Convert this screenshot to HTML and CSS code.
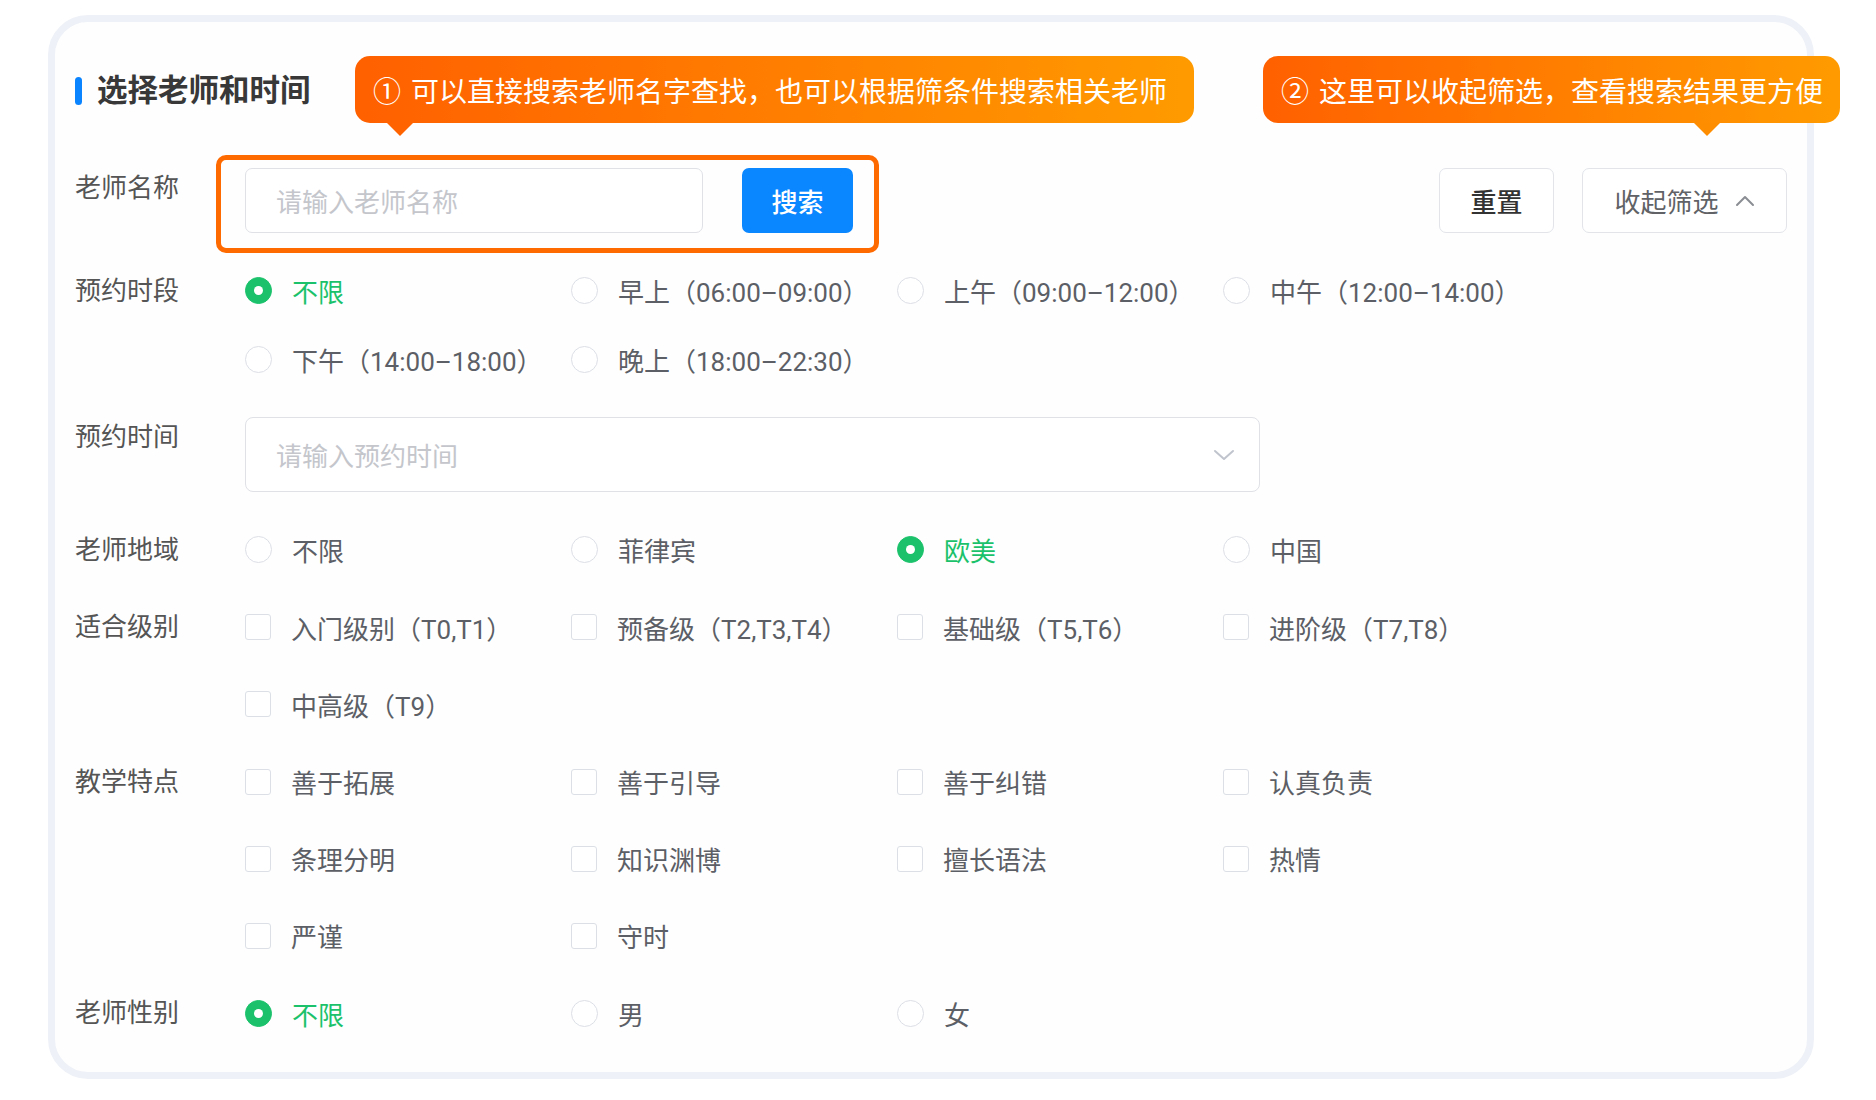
FILE: index.html
```html
<!DOCTYPE html>
<html lang="zh-CN">
<head>
<meta charset="utf-8">
<title>选择老师和时间</title>
<link rel="stylesheet" href="styles.css">
</head>
<body>
<div class="card">
  <div class="header">
    <span class="bar"></span>
    <h2 class="title">选择老师和时间</h2>
  </div>

  <div class="form">
    <div class="item">
      <div class="label">老师名称</div>
      <div class="name-controls">
        <div class="input input-name"><span class="ph">请输入老师名称</span></div>
        <button class="btn btn-primary">搜索</button>
      </div>
      <div class="actions">
        <button class="btn btn-default btn-reset">重置</button>
        <button class="btn btn-default btn-collapse">收起筛选<svg class="chev-up" width="20" height="12" viewBox="0 0 20 12"><polyline points="2,10 10,2 18,10" fill="none" stroke="#8a8d93" stroke-width="2" stroke-linecap="round" stroke-linejoin="round"/></svg></button>
      </div>
    </div>

    <div class="item">
      <div class="label">预约时段</div>
      <div class="options radios">
        <label class="opt checked"><span class="radio"></span>不限</label>
        <label class="opt"><span class="radio"></span>早上（06:00–09:00）</label>
        <label class="opt"><span class="radio"></span>上午（09:00–12:00）</label>
        <label class="opt"><span class="radio"></span>中午（12:00–14:00）</label>
        <label class="opt"><span class="radio"></span>下午（14:00–18:00）</label>
        <label class="opt"><span class="radio"></span>晚上（18:00–22:30）</label>
      </div>
    </div>

    <div class="item">
      <div class="label">预约时间</div>
      <div class="input input-time">
        <span class="ph">请输入预约时间</span>
        <svg class="chev-down" width="22" height="12" viewBox="0 0 22 12"><polyline points="2,2 11,10 20,2" fill="none" stroke="#c0c4cc" stroke-width="2" stroke-linecap="round" stroke-linejoin="round"/></svg>
      </div>
    </div>

    <div class="item">
      <div class="label">老师地域</div>
      <div class="options radios">
        <label class="opt"><span class="radio"></span>不限</label>
        <label class="opt"><span class="radio"></span>菲律宾</label>
        <label class="opt checked"><span class="radio"></span>欧美</label>
        <label class="opt"><span class="radio"></span>中国</label>
      </div>
    </div>

    <div class="item">
      <div class="label">适合级别</div>
      <div class="options checks">
        <label class="opt"><span class="checkbox"></span>入门级别（T0,T1）</label>
        <label class="opt"><span class="checkbox"></span>预备级（T2,T3,T4）</label>
        <label class="opt"><span class="checkbox"></span>基础级（T5,T6）</label>
        <label class="opt"><span class="checkbox"></span>进阶级（T7,T8）</label>
        <label class="opt"><span class="checkbox"></span>中高级（T9）</label>
      </div>
    </div>

    <div class="item">
      <div class="label">教学特点</div>
      <div class="options checks">
        <label class="opt"><span class="checkbox"></span>善于拓展</label>
        <label class="opt"><span class="checkbox"></span>善于引导</label>
        <label class="opt"><span class="checkbox"></span>善于纠错</label>
        <label class="opt"><span class="checkbox"></span>认真负责</label>
        <label class="opt"><span class="checkbox"></span>条理分明</label>
        <label class="opt"><span class="checkbox"></span>知识渊博</label>
        <label class="opt"><span class="checkbox"></span>擅长语法</label>
        <label class="opt"><span class="checkbox"></span>热情</label>
        <label class="opt"><span class="checkbox"></span>严谨</label>
        <label class="opt"><span class="checkbox"></span>守时</label>
      </div>
    </div>

    <div class="item">
      <div class="label">老师性别</div>
      <div class="options radios">
        <label class="opt checked"><span class="radio"></span>不限</label>
        <label class="opt"><span class="radio"></span>男</label>
        <label class="opt"><span class="radio"></span>女</label>
      </div>
    </div>
  </div>

  <div class="highlight"></div>
  <div class="tip tip-1"><span class="num">①</span>可以直接搜索老师名字查找，也可以根据筛条件搜索相关老师</div>
  <div class="tip tip-2"><span class="num">②</span>这里可以收起筛选，查看搜索结果更方便</div>
</div>
</body>
</html>
```

FILE: styles.css
```css
* {
  box-sizing: border-box;
}

body {
  margin: 0;
  background: #ffffff;
  font-family: Roboto, "Noto Sans CJK SC", "Noto Sans", "Liberation Sans", sans-serif;
}

.card {
  position: relative;
  margin: 15px 62px 0 48px;
  height: 1064px;
  border: 7px solid #eef1f7;
  border-radius: 40px;
  padding: 49px 20px 0 20px;
  background: #fefefe;
}

.header {
  display: flex;
  align-items: center;
  height: 40px;
  margin-bottom: 57px;
}

.bar {
  width: 7px;
  height: 28px;
  border-radius: 4px;
  background: #0b84ff;
  margin-right: 15px;
}

.title {
  margin: 0;
  font-size: 30.5px;
  line-height: 40px;
  font-weight: 700;
  color: #383838;
}

.form {
  display: flex;
  flex-direction: column;
  gap: 37.5px;
}

.item {
  display: flex;
  align-items: flex-start;
}

.label {
  flex: none;
  width: 170px;
  font-size: 26px;
  line-height: 40px;
  color: #555555;
}

.name-controls {
  display: flex;
  gap: 39px;
}

.input {
  display: flex;
  align-items: center;
  border: 1.5px solid #dfe1e7;
  border-radius: 7px;
  padding: 0 24px 0 30px;
  background: #ffffff;
}

.input-name {
  width: 458px;
  height: 65px;
}

.input-time {
  width: 1015px;
  height: 75px;
  justify-content: space-between;
  border-radius: 8px;
}

.ph {
  font-size: 26px;
  color: #c4c6cc;
}

.btn {
  height: 65px;
  border-radius: 7px;
  font-family: inherit;
  font-size: 26px;
  padding: 0;
  display: inline-flex;
  align-items: center;
  justify-content: center;
}

.btn-primary {
  width: 111px;
  border: none;
  background: #0a86ff;
  color: #ffffff;
  font-weight: 500;
}

.actions {
  margin-left: auto;
  display: flex;
  gap: 28px;
}

.btn-default {
  border: 1.5px solid #e2e4ea;
  background: #ffffff;
}

.btn-reset {
  width: 115px;
  color: #333333;
  font-weight: 500;
}

.btn-collapse {
  width: 205px;
  color: #606266;
  gap: 16px;
}

.options {
  display: grid;
  grid-template-columns: repeat(4, 326px);
}

.radios {
  row-gap: 29px;
}

.checks {
  row-gap: 37px;
}

.opt {
  display: flex;
  align-items: center;
  height: 40px;
  font-size: 26px;
  color: #5c5f66;
  white-space: nowrap;
}

.radio {
  position: relative;
  flex: none;
  width: 27px;
  height: 27px;
  border-radius: 50%;
  border: 1.5px solid #dcdfe6;
  margin-right: 20px;
  background: #ffffff;
}

.checkbox {
  flex: none;
  width: 26px;
  height: 26px;
  border-radius: 3px;
  border: 1.5px solid #dcdfe6;
  margin-right: 20px;
  background: #ffffff;
}

.opt.checked {
  color: #1bc26b;
}

.opt.checked .radio {
  background: #1bc26b;
  border-color: #1bc26b;
}

.opt.checked .radio::after {
  content: "";
  position: absolute;
  left: 50%;
  top: 50%;
  width: 9px;
  height: 9px;
  margin: -4.5px 0 0 -4.5px;
  border-radius: 50%;
  background: #ffffff;
}

.highlight {
  position: absolute;
  left: 161px;
  top: 133px;
  width: 663px;
  height: 98px;
  border: 5px solid #ff6a00;
  border-radius: 10px;
  pointer-events: none;
}

.tip {
  position: absolute;
  top: 34px;
  height: 67px;
  display: flex;
  align-items: center;
  padding: 0 18px;
  border-radius: 15px;
  background: linear-gradient(90deg, #ff6000 0%, #ff9b00 100%);
  color: #ffffff;
  font-size: 28px;
  white-space: nowrap;
}

.tip .num {
  margin-right: 10px;
  font-family: "Noto Sans CJK SC", sans-serif;
}

.tip::after {
  content: "";
  position: absolute;
  top: 100%;
  border-left: 13px solid transparent;
  border-right: 13px solid transparent;
  border-top: 13px solid #ff6300;
}

.tip-1 {
  left: 300px;
  width: 839px;
}

.tip-1::after {
  left: 32px;
  border-top-color: #ff6300;
}

.tip-2 {
  left: 1208px;
  width: 577px;
}

.tip-2::after {
  left: 431px;
  border-top-color: #ff8d00;
}
```
